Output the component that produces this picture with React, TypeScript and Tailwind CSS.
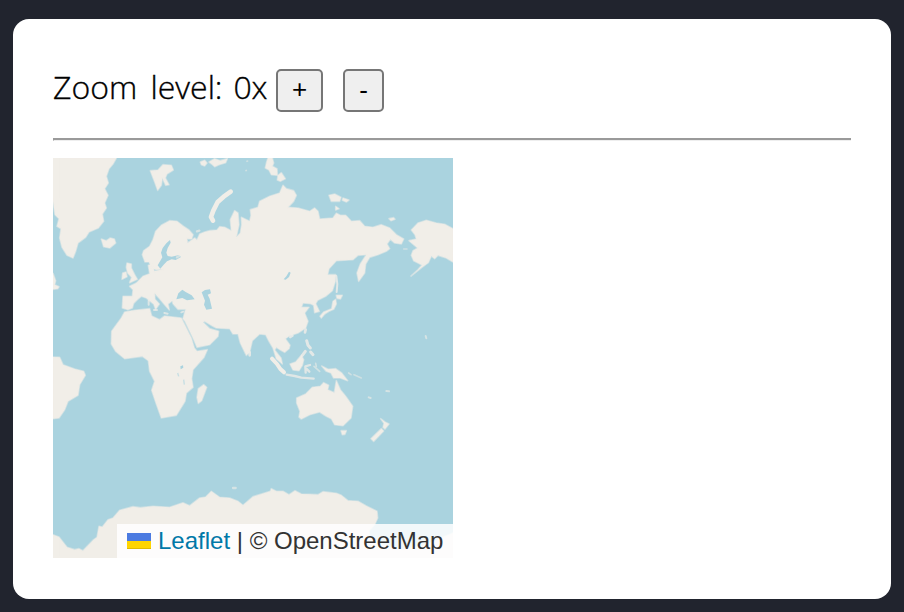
const LAND = [
  // Greenland and Newfoundland
  "M0 0H190L180 18 168 32 160 55 166 75 155 92 165 112 155 135 160 150 148 168 152 190 136 210 108 222 98 238 75 255 68 280 60 300 42 292 27 268 20 240 24 212 12 205 18 182 6 170 0 130Z",
  "M0 346L8 368 5 380 18 386 14 392 0 394Z",
  // Iceland and Svalbard
  "M145 243L160 248 172 240 184 243 188 255 170 270 152 266Z",
  "M292 38L315 36 330 20 355 22 361 36 342 48 337 60 348 80 338 82 328 60 325 82 314 97 305 72Z",
  // Eurasia
  "M310 335L296 330 288 312 276 312 268 290 272 278 290 265 300 245 308 220 325 202 350 188 372 190 390 204 408 216 420 230 416 243 402 242 404 255 425 240 432 246 440 228 455 222 470 218 492 216 500 206 515 208 535 218 532 185 545 158 555 165 558 200 550 238 562 225 566 200 565 178 590 190 594 172 592 155 615 148 620 130 650 115 680 105 690 82 700 92 722 98 730 112 722 130 705 148 735 150 770 160 785 150 795 160 800 183 840 180 850 166 862 172 878 172 895 190 920 188 935 205 960 208 985 200 1010 210 1030 230 1052 243 1045 258 1025 255 1012 244 1002 258 1010 272 1000 280 975 290 950 298 938 318 935 345 917 370 912 345 922 318 940 290 915 292 900 305 850 308 828 332 824 350 848 350 847 370 838 398 818 415 794 427 788 437 799 460 785 464 782 442 773 437 750 435 745 448 768 448 755 465 765 490 758 510 735 525 710 533 697 542 711 562 708 572 695 583 681 575 670 568 665 576 684 600 688 618 670 602 660 570 648 550 638 530 620 528 598 548 590 582 580 592 562 555 555 528 540 528 530 512 490 510 480 505 455 490 450 493 470 512 497 520 495 535 470 560 432 568 420 540 396 490 390 482 398 454 375 454 360 437 358 428 345 438 349 456 335 440 320 422 305 406 306 424 319 438 308 454 302 438 280 420 265 415 255 423 242 436 238 450 225 455 208 450 210 415 238 415 240 395 230 385 250 375 270 355 290 347 286 322 298 318 304 340 330 334Z",
  // Africa and Madagascar
  "M245 457L290 452 296 474 320 485 335 474 385 480 395 500 415 540 424 570 432 580 463 575 453 598 420 635 416 662 420 688 400 705 396 730 370 772 325 780 310 738 296 697 305 670 290 640 286 608 268 595 215 602 188 580 175 558 176 520 205 480 215 462Z",
  "M452 680L461 688 446 728 436 736 432 718 436 692Z",
  // South America
  "M0 597L20 598 30 620 65 633 92 640 97 652 80 680 75 712 45 730 35 755 18 780 0 782Z",
  // British Isles
  "M222 315L235 318 235 330 245 350 253 364 230 374 236 358 224 345 220 328Z",
  "M209 345L219 342 222 356 207 364Z",
  // Siberian islands
  "M645 0H658L662 15 658 25 672 32 673 52 655 50 648 36 637 30 641 12Z",
  "M675 52L685 44 697 62 682 70 673 66Z",
  "M828 112L845 108 864 118 860 130 835 130Z",
  "M870 120L888 126 880 132 868 127Z",
  "M848 145L858 152 848 156Z",
  "M1008 182L1022 179 1026 184 1014 188Z",
  "M442 12L455 7 462 15 455 24 445 20Z",
  "M468 12L485 2 502 8 523 2 518 14 498 20 485 26 476 18Z",
  // Alaska
  "M1075 216L1095 195 1120 187 1150 195 1175 199 1200 212V312L1180 300 1155 292 1145 302 1135 294 1126 314 1104 330 1074 354 1095 335 1107 321 1082 308 1075 292 1080 278 1094 270 1068 248 1090 243 1086 230Z",
  // Indonesia and New Guinea
  "M711 618L728 612 745 592 752 605 748 622 738 638 720 636Z",
  "M806 624L825 634 848 632 866 645 884 668 862 660 842 660 834 645 820 640Z",
  // Australia, Tasmania, New Zealand
  "M731 720L758 708 778 688 802 685 812 674 827 682 824 695 844 704 850 668 862 695 878 715 899 745 894 780 870 803 845 800 835 782 820 775 800 762 770 770 745 783 738 777 741 760 731 735Z",
  "M864 818L880 818 876 829 868 830Z",
  "M983 782L996 792 1008 798 996 813 990 808 993 796Z",
  "M985 812L992 819 962 850 954 842Z",
  // Japan
  "M850 412L868 412 862 423 852 421Z",
  "M848 424L850 438 842 454 828 460 815 468 805 480 801 475 812 462 836 452 840 430Z",
  // Antarctica
  "M0 1130L18 1137 42 1168 65 1175 78 1172 90 1178 122 1145 132 1138 138 1105 148 1107 165 1085 180 1080 200 1057 240 1046 262 1049 300 1045 350 1048 390 1034 410 1043 440 1020 458 1017 475 1000 500 1018 530 1020 555 1030 570 1042 600 1016 652 1000 655 992 670 1000 690 1000 708 1010 726 998 745 1008 770 1009 795 1010 810 1001 850 1006 865 1012 885 1028 915 1030 940 1044 972 1060 974 1080 966 1098 948 1118 950 1138 990 1160 1050 1175 1120 1160 1200 1125V1200H0Z",
];

const WATER = [
  "M351 246L340 256 329 270 324 284 328 298 322 308 314 322 322 332 332 320 342 310 356 304 368 306 384 297 378 291 356 296 344 294 340 284 344 270 353 254Z",
  "M370 424L376 406 388 395 398 402 416 412 425 424 402 427 388 420Z",
  "M446 403L456 396 471 394 474 406 464 410 470 422 477 452 460 455 453 440 456 428Z",
  "M692 364L700 355 708 341 713 344 708 357 698 365Z",
  "M382 625L390 622 391 629 383 634Z",
];

// Narrow island chains, drawn as lines: [path, width, opacity]
const CHAINS: [string, number, number][] = [
  ["M480 188L474 177 481 158 494 132 512 116 533 101", 14, 1],
  ["M850 354L853 378 851 402", 6, 0.8],
  ["M657 602L672 618 682 633 693 643", 12, 1],
  ["M701 650L725 654 745 659 782 662", 7, 0.75],
  ["M758 644L757 625 771 621M760 632L769 641", 7, 0.75],
  ["M761 548L765 562 772 570M748 592L757 580M773 582L780 590", 9, 0.8],
  ["M758 515L756 523M712 537L718 533M590 592L590 583", 8, 0.8],
  ["M783 625L800 640M788 616L790 625", 5, 0.55],
  ["M887 645L894 650M903 650L925 660", 5, 0.5],
  ["M947 718L953 720M1000 699L1008 700M1118 534L1120 541", 6, 0.6],
  ["M287 428V440M303 456H312M334 465L344 467M385 463L391 461", 6, 0.7],
  ["M432 220L439 218M540 990L548 990M372 298L379 294", 7, 0.6],
  ["M1052 273L1062 273M582 10L584 9M579 38L580 37", 5, 0.5],
];

function WorldMap() {
  return (
    <svg className="block h-[400px] w-[400px]" viewBox="0 0 1200 1200" aria-label="World map">
      <filter id="coast" x="-20" y="-20" width="1240" height="1240" filterUnits="userSpaceOnUse" colorInterpolationFilters="sRGB">
        <feGaussianBlur stdDeviation="2" />
      </filter>
      <rect width="1200" height="1200" fill="#aad3df" />
      <g filter="url(#coast)">
        <g fill="#f1eee8" stroke="#f1eee8" strokeOpacity=".5" strokeWidth="5" strokeLinejoin="round">
          {LAND.map((d) => (
            <path key={d} d={d} />
          ))}
          <path d="M-20 0H20V120H-20ZM-20 1140H20V1220H-20ZM0 1196H1220V1220H0Z" stroke="none" />
        </g>
        <g fill="#aad3df">
          {WATER.map((d) => (
            <path key={d} d={d} />
          ))}
        </g>
        <g fill="none" stroke="#f1eee8" strokeLinecap="round" strokeLinejoin="round">
          {CHAINS.map(([d, width, opacity]) => (
            <path key={d} d={d} strokeWidth={width} opacity={opacity} />
          ))}
        </g>
        <path d="M374 645L377 655M392 665L394 680" fill="none" stroke="#aad3df" strokeWidth="4" opacity=".6" />
      </g>
    </svg>
  );
}

export default function App() {
  return (
    <div className="h-[612px] w-[904px] bg-[#21242e] pt-[19px] pl-[13px]">
      <main className="h-[580px] w-[878px] rounded-2xl bg-white px-10 pt-[50px]">
        <div className="flex h-[43px] items-start text-black">
          <div className="flex w-[223px] gap-[11px] whitespace-nowrap font-['Open_Sans',sans-serif] text-[32px] leading-[36px] font-light [-webkit-text-stroke:0.35px_black]">
            <span className="[word-spacing:5px]">Zoom level:</span>
            <span className="tracking-[-0.3px]">0x</span>
          </div>
          <button className="h-[43px] w-[47px] rounded-[5px] border-2 border-[#767676] bg-[#efefef] pb-[4px] font-['Liberation_Sans',sans-serif] text-[26px] leading-none">
            +
          </button>
          <button className="ml-5 h-[43px] w-[41px] rounded-[5px] border-2 border-[#767676] bg-[#efefef] pb-[2px] font-['Liberation_Sans',sans-serif] text-[26px] leading-none">
            -
          </button>
        </div>
        <hr className="mt-[26px] mb-[17px] h-[3px] border-t-2 border-b border-l border-t-[#9a9a9a] border-b-[#eeeeee] border-l-[#9a9a9a]" />
        <div className="relative h-[400px] w-[400px] overflow-hidden">
          <WorldMap />
          <div className="absolute right-0 bottom-0 flex h-[34px] w-[336px] items-center bg-white/85 pl-[10px] font-['Liberation_Sans',sans-serif] text-2xl leading-[34px] whitespace-pre text-[#333333]">
            <svg className="mr-[7px] h-4 w-6 shrink-0" viewBox="0 0 12 8" aria-hidden="true">
              <path fill="#4c7be1" d="M0 0h12v4H0z" />
              <path fill="#ffd500" d="M0 4h12v3.5H0z" />
              <path fill="#e0bc00" d="M0 7.5h12v.5H0z" />
            </svg>
            <a className="text-[#0078a8]">Leaflet</a> | © OpenStreetMap
          </div>
        </div>
      </main>
    </div>
  );
}
